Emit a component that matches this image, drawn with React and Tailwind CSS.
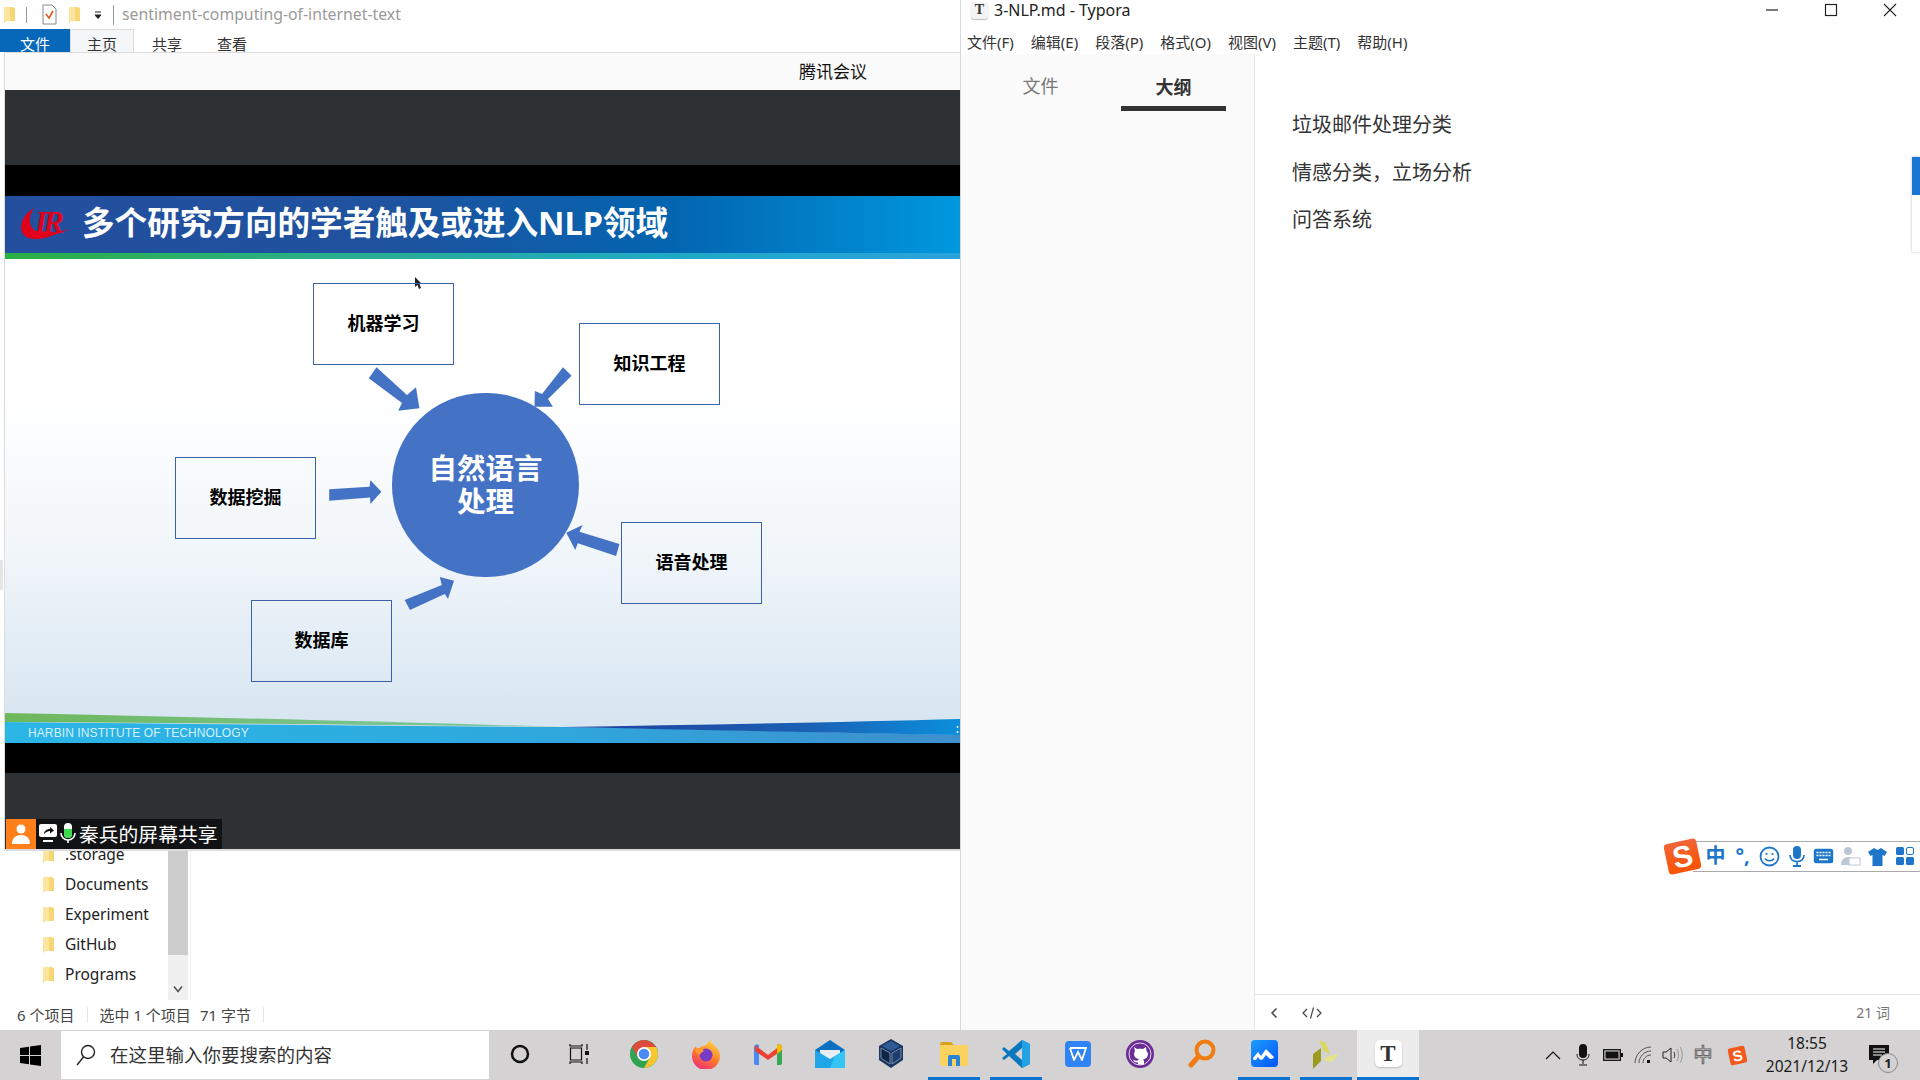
import React from 'react';

const cjk = "font-['Noto_Sans','Noto_Sans_CJK_SC',sans-serif]";

const Folder = ({ className = '' }) => (
  <svg className={className} width="14" height="18" viewBox="0 0 14 18">
    <path d="M1 1h8l3 1v13H3l-2 2z" fill="#f9d675" />
    <path d="M1 1h6v14H1z" fill="#fce59f" />
  </svg>
);

const nodes = [
  { text: '机器学习', pos: 'left-[308px] top-[24px]' },
  { text: '知识工程', pos: 'left-[574px] top-[64px]' },
  { text: '数据挖掘', pos: 'left-[170px] top-[198px]' },
  { text: '语音处理', pos: 'left-[616px] top-[263px]' },
  { text: '数据库', pos: 'left-[246px] top-[341px]' },
];

const arrows = [
  '376.5,367.3 407,395 416,387.3 419.4,408.3 398.2,410.7 402,403 368.8,378.3',
  '563,367.3 542,394 534.9,391 534.5,406.7 552.9,406.7 548,399 571.6,375.7',
  '329.2,489.3 369.5,486.7 370.4,480.3 381.4,491.7 370.4,504 370,497.5 329.2,500.7',
  '619.4,544 579.4,531.7 582.7,525 566.3,532.7 575.3,550 577.8,543.3 616.1,556',
  '404.7,600 441.8,585 439.8,577 454,580.7 448,598.7 444.7,594 410,610',
];

const Slide = () => (
  <div className="flex h-[547px] flex-col">
    {/* Slide header */}
    <div className="flex h-[57px] items-center bg-[linear-gradient(90deg,#234f9e_0%,#1f529f_40%,#0365b0_70%,#0098de_100%)] pb-[2px] pl-[15px]">
      <svg width="52" height="36" viewBox="0 0 52 36">
        <path d="M14 2C4 8-1 18 2 26c2 7 14 9 26 5 8-3 16-5 22-8-12 3-26 6-34 2C8 21 8 10 14 2z" fill="#e1001a" />
        <text x="15" y="27" fill="#e1001a" fontFamily="Liberation Serif" fontStyle="italic" fontWeight="700" fontSize="31" textLength="29">IR</text>
      </svg>
      <h1 className="ml-[10px] text-[32.6px] leading-none font-bold text-white">多个研究方向的学者触及或进入NLP领域</h1>
    </div>
    <div className="h-[6px] bg-[linear-gradient(90deg,#2bb042_0%,#29ae8e_35%,#1fa9c6_70%,#2aa3dc_100%)]" />

    {/* Diagram */}
    <div className="relative flex-1 overflow-hidden bg-[linear-gradient(180deg,#ffffff_0%,#ffffff_28%,#f1f6fa_60%,#d8e6f1_95%)]">
      <svg className="absolute inset-0" width="955" height="484" viewBox="5 259 955 484">
        {arrows.map((pts) => (
          <polygon key={pts} points={pts} fill="#4472c4" />
        ))}
        <polygon points="415,277 415,287 417.5,285 419,289 421,288 419.5,284 422,284" fill="#222" />
      </svg>
      {nodes.map((n) => (
        <div key={n.text} className={`absolute flex h-[82px] w-[141px] items-center justify-center border border-[#3a62a9] pb-[2px] text-[18px] font-bold text-black ${n.pos}`}>
          {n.text}
        </div>
      ))}
      <div className="absolute top-[134px] left-[387px] flex h-[184px] w-[187px] items-center justify-center rounded-full bg-[#4472c4] text-center text-[28.5px] leading-[33px] font-bold text-white">
        自然语言<br />处理
      </div>

      {/* Footer wave */}
      <svg className="absolute bottom-0 left-0" width="955" height="31" viewBox="5 712 955 31">
        <defs>
          <linearGradient id="band" x1="0" x2="1" y1="0" y2="0">
            <stop offset="0" stopColor="#2bb6e6" />
            <stop offset="0.55" stopColor="#2ea8de" />
            <stop offset="1" stopColor="#3e8fcd" />
          </linearGradient>
          <linearGradient id="wave" x1="0" x2="1" y1="0" y2="0">
            <stop offset="0" stopColor="#1d3f9c" />
            <stop offset="0.6" stopColor="#1b5fb3" />
            <stop offset="1" stopColor="#0b8fdc" />
          </linearGradient>
          <linearGradient id="grass" x1="0" x2="1" y1="0" y2="0">
            <stop offset="0" stopColor="#6db85a" />
            <stop offset="1" stopColor="#7fc8a8" />
          </linearGradient>
        </defs>
        <path d="M5 722C200 724 400 726 563 727C700 729 850 733 960 735V743H5Z" fill="url(#band)" />
        <path d="M5 713C200 717 400 722 563 727C400 725 200 723 5 722Z" fill="url(#grass)" />
        <path d="M563 727C700 725 850 722 960 719V735C850 733 700 730 563 727Z" fill="url(#wave)" />
        <circle cx="957.5" cy="727" r="1" fill="#fff" />
        <circle cx="957.5" cy="732" r="1" fill="#fff" />
      </svg>
      <span className="absolute bottom-[4px] left-[23px] font-['Liberation_Sans',sans-serif] text-[12px] leading-none tracking-[0.1px] text-[#d5f0fa]">HARBIN INSTITUTE OF TECHNOLOGY</span>
    </div>
  </div>
);

const ExplorerPane = () => (
  <div className="flex h-[149px] overflow-hidden">
    <ul className="-mt-[11px] w-[168px] text-[15.5px] text-[#222]">
      {['.storage', 'Documents', 'Experiment', 'GitHub', 'Programs'].map((name) => (
        <li key={name} className="flex h-[30px] items-center pl-[42px]">
          <Folder />
          <span className="ml-[9px]">{name}</span>
        </li>
      ))}
    </ul>
    <div className="flex w-[20px] flex-col bg-[#f0f0f0]">
      <div className="h-[104px] bg-[#cdcdcd]" />
      <div className="mt-auto flex h-[22px] items-center justify-center">
        <svg width="10" height="8" viewBox="0 0 10 8"><path d="M1 1.5l4 5 4-5" fill="none" stroke="#555" strokeWidth="1.6" /></svg>
      </div>
    </div>
    <div className="w-[3px] border-r border-[#f0f0f0]" />
  </div>
);

const LeftColumn = () => (
  <div className="flex w-[960px] flex-col bg-white">
    {/* Explorer title */}
    <div className="flex h-[29px] items-center">
      <Folder className="ml-[3px]" />
      <div className="ml-[9px] h-[16px] w-px bg-[#999]" />
      <svg className="ml-[15px]" width="15" height="21" viewBox="0 0 15 21">
        <path d="M1 1h9l4 4v15H1z" fill="#fff" stroke="#888" />
        <path d="M4 10l3 4 4-7" fill="none" stroke="#e2571e" strokeWidth="1.6" />
      </svg>
      <Folder className="ml-[11px]" />
      <svg className="ml-[12px]" width="8" height="8" viewBox="0 0 8 8"><path d="M1 1h6M1 4h6L4 7.5z" stroke="#222" fill="#222" /></svg>
      <div className="ml-[11px] h-[20px] w-px bg-[#999]" />
      <span className="ml-[8px] text-[15.8px] text-[#9a9a9a]">sentiment-computing-of-internet-text</span>
    </div>
    {/* Ribbon tabs */}
    <div className="flex h-[23px] overflow-hidden text-[15px] leading-[20px] text-[#333]">
      <div className="w-[70px] bg-[#0767b8] pt-[5px] text-center text-white">文件</div>
      <div className="w-[64px] border-x border-t border-[#dadbdc] bg-[#f5f6f7] pt-[4px] text-center">主页</div>
      <div className="ml-[18px] w-[30px] pt-[5px]">共享</div>
      <div className="ml-[35px] w-[30px] pt-[5px]">查看</div>
    </div>
    {/* Tencent Meeting window */}
    <div className="ml-[4px] flex h-[799px] flex-col border-t border-b-2 border-l border-[#dcdcdc]">
      <div className="flex h-[37px] items-center justify-end bg-[#fafafa] pr-[93px] text-[17px] text-[#111]">腾讯会议</div>
      <div className="h-[75px] bg-[#2e3134]" />
      <div className="h-[31px] bg-black" />
      <Slide />
      <div className="h-[30px] bg-black" />
      <div className="relative flex-1 bg-[#2e3134]">
        <div className="absolute bottom-0 left-[1px] flex h-[30px] w-[216px] items-center bg-[#111214] text-[19.8px] leading-none text-white">
          <div className="flex h-[30px] w-[30px] items-center justify-center bg-[#ff7f1a]">
            <svg width="22" height="24" viewBox="0 0 22 24"><circle cx="11" cy="7" r="4.5" fill="#fff" /><path d="M2 22c0-6 4-9 9-9s9 3 9 9z" fill="#fff" /></svg>
          </div>
          <svg className="ml-[2px]" width="20" height="24" viewBox="0 0 20 24">
            <rect x="1" y="2" width="18" height="13" rx="2" fill="#fff" />
            <path d="M6 12c0-3 3-5 6-5V5l4 3.5-4 3V9c-2 0-4 1-6 3z" fill="#111" />
            <rect x="5" y="18" width="10" height="2" fill="#fff" />
          </svg>
          <svg width="20" height="24" viewBox="0 0 20 24">
            <rect x="6" y="1" width="8" height="15" rx="4" fill="#fff" />
            <path d="M6 7h8v5a4 4 0 0 1-8 0z" fill="#3ddc4e" />
            <path d="M3 11c0 4 3 7 7 7s7-3 7-7" fill="none" stroke="#fff" strokeWidth="1.6" />
            <path d="M10 18v3" stroke="#fff" strokeWidth="1.6" />
          </svg>
          <span className="ml-[1px] pt-[2px]">秦兵的屏幕共享</span>
        </div>
      </div>
    </div>
    <ExplorerPane />
    {/* Status bar */}
    <div className="flex h-[30px] items-center pl-[17px] text-[15px] text-[#444]">
      <span>6 个项目</span>
      <div className="ml-[13px] h-[16px] w-px bg-[#e4e4e4]" />
      <span className="ml-[11px]">选中 1 个项目</span>
      <span className="ml-[9px]">71 字节</span>
      <div className="ml-[12px] h-[16px] w-px bg-[#e4e4e4]" />
    </div>
  </div>
);

const menus = ['文件(F)', '编辑(E)', '段落(P)', '格式(O)', '视图(V)', '主题(T)', '帮助(H)'];

const TyporaMark = () => (
  <div className="flex h-[17px] w-[17px] items-center justify-center rounded-[3px] bg-[#f4f4f4] font-['Liberation_Serif',serif] text-[14px] leading-none font-bold text-[#333] shadow-[0_1px_1px_#bbb]">T</div>
);

const RightColumn = () => (
  <div className="flex w-[960px] flex-col border-l border-[#d9d9d9] bg-white">
    <div className="flex h-[22px] items-center pb-[2px]">
      <div className="ml-[10px]"><TyporaMark /></div>
      <span className="ml-[6px] text-[16px] text-[#222]">3-NLP.md - Typora</span>
      <div className="ml-auto flex pr-px">
        <div className="flex w-[59px] justify-center">
          <svg width="14" height="14" viewBox="0 0 14 14"><path d="M1 7h12" stroke="#222" strokeWidth="1.2" /></svg>
        </div>
        <div className="flex w-[59px] justify-center">
          <svg width="14" height="14" viewBox="0 0 14 14"><rect x="1.5" y="1.5" width="11" height="11" fill="none" stroke="#222" strokeWidth="1.2" /></svg>
        </div>
        <div className="flex w-[59px] justify-center">
          <svg width="14" height="14" viewBox="0 0 14 14"><path d="M1 1l12 12M13 1L1 13" stroke="#222" strokeWidth="1.1" /></svg>
        </div>
      </div>
    </div>
    <div className="flex h-[32px] items-center gap-[17px] pt-[8px] pl-[6px] text-[15px] text-[#333]">
      {menus.map((m) => <span key={m}>{m}</span>)}
    </div>

    <div className="flex flex-1">
      {/* Sidebar */}
      <aside className="w-[294px] border-r border-[#e8e8e8] bg-[#fafafa]">
        <div className="flex gap-[28px] pl-[27px] text-[18px]">
          <div className="h-[57px] w-[105px] pt-[3px] text-center leading-[58px] text-[#777]">文件</div>
          <div className="h-[57px] w-[105px] border-b-[5px] border-[#333] pt-[4px] text-center leading-[58px] font-bold text-[#333]">大纲</div>
        </div>
      </aside>
      {/* Editor */}
      <main className="flex flex-1 flex-col">
        <div className="flex-1 pt-[47px] pl-[37px] text-[20px] leading-[47.7px] text-[#333]">
          <p>垃圾邮件处理分类</p>
          <p>情感分类，立场分析</p>
          <p>问答系统</p>
        </div>
        <footer className="flex h-[36px] items-center border-t border-[#e4e4e4] pr-[30px] pl-[13px] text-[#666]">
          <svg width="12" height="14" viewBox="0 0 12 14"><path d="M8.5 2.5L4 7l4.5 4.5" fill="none" stroke="#444" strokeWidth="1.5" /></svg>
          <svg className="ml-[21px]" width="22" height="14" viewBox="0 0 22 14"><path d="M6 3L2 7l4 4M16 3l4 4-4 4M12.500 1.500L9.500 12.500" fill="none" stroke="#444" strokeWidth="1.2" /></svg>
          <span className="ml-auto text-[14px] text-[#777]">21 词</span>
        </footer>
      </main>
    </div>
  </div>
);

const Cell = ({ on, light, children, width = 'w-[62px]' }) => (
  <div className={`flex h-full flex-col ${width} ${light ? 'bg-[#ececec]' : ''}`}>
    <div className="flex flex-1 items-center justify-center">{children}</div>
    {on ? <div className={`h-[3px] bg-[#0c74d0] ${light ? '' : 'mx-[5px]'}`} /> : <div className="h-[3px]" />}
  </div>
);

const Chrome = () => (
  <svg width="28" height="28" viewBox="0 0 28 28">
    <circle cx="14" cy="14" r="14" fill="#2fa351" />
    <path d="M26.1 7A14 14 0 0 1 14 28L20 17.5L14 7Z" fill="#fbc62f" />
    <path d="M1.9 7A14 14 0 0 1 26.1 7H14L8 17.5Z" fill="#dd4b3e" />
    <circle cx="14" cy="14" r="7" fill="#fff" />
    <circle cx="14" cy="14" r="5.3" fill="#4a8af4" />
  </svg>
);

const Firefox = () => (
  <svg width="30" height="30" viewBox="0 0 30 30">
    <defs>
      <linearGradient id="ff" x1="0.7" x2="0.2" y1="0" y2="1">
        <stop offset="0" stopColor="#ffd53d" />
        <stop offset="0.5" stopColor="#ff7a2b" />
        <stop offset="1" stopColor="#f0267e" />
      </linearGradient>
    </defs>
    <path d="M19 1c1 3 3 4 5 6 3 3 5 6 5 10a14 14 0 0 1-28 0c0-4 1-7 4-10 0 2 1 3 2 4 2-4 7-4 9-6 1-1 2-3 3-4z" fill="url(#ff)" />
    <circle cx="15" cy="16" r="6.5" fill="#7a3bc4" />
    <path d="M4 10c3-2 7-1 9 2-2 1-4 2-4 4-3-1-5-3-5-6z" fill="#ff9a2b" />
  </svg>
);

const Gmail = () => (
  <svg width="28" height="22" viewBox="0 0 28 22">
    <path d="M0 4a3 3 0 0 1 5-2v20H2a2 2 0 0 1-2-2z" fill="#4a8af4" />
    <path d="M28 4a3 3 0 0 0-5-2v20h3a2 2 0 0 0 2-2z" fill="#34a853" />
    <path d="M1 2l13 10L27 2v6L14 17 1 8z" fill="#ea4335" />
    <path d="M23 2a3 3 0 0 1 5 2v3l-5 4z" fill="#fbbc04" />
  </svg>
);

const Mail = () => (
  <svg width="30" height="28" viewBox="0 0 30 28">
    <path d="M0 10L15 0l15 10v18H0z" fill="#0c6fc0" />
    <path d="M5 10h20v6l-10 6-10-6z" fill="#e8eef4" />
    <path d="M0 10l15 9 15-9v18H0z" fill="#1fa5e8" />
    <path d="M30 10v18H15l5-12z" fill="#35c5f5" />
  </svg>
);

const VirtualBox = () => (
  <svg className="mr-[2px]" width="26" height="29" viewBox="0 0 26 29">
    <path d="M13 0l12 7v14l-12 8-12-8V7z" fill="#1a3560" />
    <path d="M13 2l9 5-9 5-9-5z" fill="#2f5c96" />
    <path d="M3 9l9 5v11l-9-6z" fill="#0f2547" stroke="#9ab0c8" strokeWidth="0.7" />
    <path d="M23 9l-9 5v11l9-6z" fill="#1f3d6c" stroke="#9ab0c8" strokeWidth="0.7" />
  </svg>
);

const ExplorerIcon = () => (
  <svg width="28" height="24" viewBox="0 0 28 24">
    <path d="M0 2a2 2 0 0 1 2-2h9l3 3H0z" fill="#d9a21e" />
    <path d="M0 3h28v19a2 2 0 0 1-2 2H2a2 2 0 0 1-2-2z" fill="#fbd25e" />
    <path d="M8 24v-9a2 2 0 0 1 2-2h8a2 2 0 0 1 2 2v9h-4v-7h-4v7z" fill="#2a84d6" />
  </svg>
);

const VSCode = () => (
  <svg width="30" height="30" viewBox="0 0 30 30">
    <path d="M21 1l8 4v20l-8 4-13-12 -5 4-2-2 5-4-5-5 2-2 5 4z" fill="#0a78c0" />
    <path d="M21 1l8 4v20l-8 4z" fill="#21a3e6" />
    <path d="M21 9l-7 6 7 6z" fill="#d4d2d2" />
  </svg>
);

const Wps = () => (
  <div className="flex h-[26px] w-[26px] items-center justify-center rounded-[4px] bg-[#2f83f2]">
    <svg width="18" height="14" viewBox="0 0 18 14"><path d="M1 1h16l-4 12-4-8-4 8-4-12" fill="none" stroke="#fff" strokeWidth="1.8" /></svg>
  </div>
);

const GithubIcon = () => (
  <svg width="28" height="28" viewBox="0 0 28 28">
    <circle cx="14" cy="14" r="14" fill="#6c2c96" />
    <circle cx="14" cy="14" r="11" fill="none" stroke="#e6d8ee" strokeWidth="1" />
    <path d="M8 7l3 2c2-.5 4-.5 6 0l3-2 .5 4c1 1 1.500 2 1.500 3 0 3-2 5-5 5.500.5.5 1 1 1 2v3h-6v-2c-3 .5-4-1-5-3 1 .5 2 1.500 5 1 0-.5.500-1 1-1.500-3-.5-5-2-5-5 0-1 .5-2 1-3z" fill="#fff" />
  </svg>
);

const Zoomer = () => (
  <svg width="28" height="30" viewBox="0 0 28 30">
    <circle cx="17" cy="11" r="8.500" fill="none" stroke="#f07c12" strokeWidth="4" />
    <path d="M10 18L3 26" stroke="#f07c12" strokeWidth="5" strokeLinecap="round" />
  </svg>
);

const Meeting = () => (
  <div className="flex h-[27px] w-[27px] items-center justify-center rounded-[4px] bg-[linear-gradient(135deg,#1b9cfa,#0556ff)]">
    <svg width="22" height="12" viewBox="0 0 22 12"><path d="M0 10l5-6 3 4 5-7 8 8c-1 2-4 3-5 1l-3-3-3 4c-2 2-4 0-5-2l-2 3c-1 1-3 0-3-2z" fill="#fff" /></svg>
  </div>
);

const Pieces = () => (
  <svg width="28" height="30" viewBox="0 0 28 30">
    <path d="M7 1l7 3 4 11-6-3z" fill="#d9d75c" />
    <path d="M17 17l10-2-7 8-10-2z" fill="#e4e48a" />
    <path d="M1 15l8-6v13l-8 8z" fill="#9b9b1f" />
  </svg>
);

const TrayCell = ({ children }) => <div className="flex w-[30px] items-center justify-center">{children}</div>;

const Taskbar = () => (
  <div className="flex h-[50px] bg-[#d4d2d2] text-black">
    <div className="flex w-[61px] items-center justify-center">
      <svg width="21" height="21" viewBox="0 0 21 21"><path d="M0 3l9-1.300V10H0zM10 1.500L21 0v10H10zM0 11h9v8.300L0 18zM10 11h11v10l-11-1.500z" fill="#000" /></svg>
    </div>
    <div className="my-px flex w-[428px] items-center bg-white pl-[14px] text-[18.500px] text-[#333]">
      <svg width="22" height="24" viewBox="0 0 22 24"><circle cx="13" cy="9" r="6.500" fill="none" stroke="#222" strokeWidth="1.400" /><path d="M8.500 14L2 22" stroke="#222" strokeWidth="1.400" /></svg>
      <span className="ml-[13px]">在这里输入你要搜索的内容</span>
    </div>
    <Cell width="w-[62px]">
      <svg className="mr-[1px]" width="22" height="22" viewBox="0 0 22 22"><circle cx="11" cy="11" r="8" fill="none" stroke="#111" strokeWidth="2.500" /></svg>
    </Cell>
    <Cell>
      <svg className="mr-[4px]" width="22" height="22" viewBox="0 0 22 22"><path d="M1 1v2h12V1M1 21v-2h12v2M1.500 5h11v12h-11zM18 1v6M18 15v6" fill="none" stroke="#111" strokeWidth="1.200" /><rect x="16" y="8" width="4" height="4" fill="#111" /></svg>
    </Cell>
    <Cell><Chrome /></Cell>
    <Cell><Firefox /></Cell>
    <Cell><Gmail /></Cell>
    <Cell><Mail /></Cell>
    <Cell><VirtualBox /></Cell>
    <Cell on><ExplorerIcon /></Cell>
    <Cell on><VSCode /></Cell>
    <Cell><Wps /></Cell>
    <Cell><GithubIcon /></Cell>
    <Cell><Zoomer /></Cell>
    <Cell on><Meeting /></Cell>
    <Cell on><Pieces /></Cell>
    <Cell on light>
      <div className="flex h-[27px] w-[27px] items-center justify-center rounded-[5px] bg-white font-['Liberation_Serif',serif] text-[23px] leading-none font-bold text-[#333] shadow-[0_1px_2px_#bbb]">T</div>
    </Cell>

    {/* Tray */}
    <div className="ml-auto flex pr-[2px]">
      <TrayCell><svg width="16" height="10" viewBox="0 0 16 10"><path d="M1 9l7-7 7 7" fill="none" stroke="#111" strokeWidth="1.200" /></svg></TrayCell>
      <TrayCell>
        <svg width="14" height="22" viewBox="0 0 14 22"><rect x="3" y="0" width="8" height="14" rx="4" fill="#111" /><path d="M1 10c0 4 2.500 6 6 6s6-2 6-6M7 16v4M3 21h8" fill="none" stroke="#111" strokeWidth="1" /></svg>
      </TrayCell>
      <TrayCell>
        <svg width="20" height="12" viewBox="0 0 20 12"><rect x="0.700" y="0.700" width="16.600" height="10.600" fill="none" stroke="#111" strokeWidth="1.300" /><rect x="2.500" y="2.500" width="13" height="7" fill="#111" /><rect x="18" y="4" width="2" height="4" fill="#111" /></svg>
      </TrayCell>
      <TrayCell>
        <svg width="18" height="18" viewBox="0 0 18 18"><path d="M1 17C1 9 8 1 17 1M5 17c0-6 5-12 12-12M9 17c0-4 3-8 8-8" fill="none" stroke="#555" strokeWidth="1" /><rect x="13" y="14" width="3" height="3" fill="#111" /></svg>
      </TrayCell>
      <TrayCell>
        <svg width="22" height="18" viewBox="0 0 22 18"><path d="M1 6h3l5-4v14l-5-4H1z" fill="none" stroke="#222" strokeWidth="1" /><path d="M12 6c1 2 1 4 0 6" fill="none" stroke="#333" /><path d="M15 3c2 4 2 8 0 12M18 1c3 5 3 11 0 16" fill="none" stroke="#999" /></svg>
      </TrayCell>
      <TrayCell><span className="text-[19px] leading-none text-[#f4f4f4] [-webkit-text-stroke:1px_#666]">中</span></TrayCell>
      <div className="flex w-[34px] items-center justify-center pl-[4px]">
        <div className="flex h-[17px] w-[17px] -rotate-12 items-center justify-center rounded-[2px] bg-[#f25a1d] font-['Liberation_Sans',sans-serif] text-[15px] leading-none font-bold text-white">S</div>
      </div>
      <div className="flex w-[110px] flex-col items-center pt-[2px] text-[15.5px] leading-[23px] text-[#1a1a1a]">
        <span>18:55</span>
        <span>2021/12/13</span>
      </div>
      <div className="relative w-[56px]">
        <svg className="absolute top-[15px] left-[7px]" width="20" height="20" viewBox="0 0 20 20"><path d="M0 0h20v15H8l-4 4v-4H0z" fill="#111" /><path d="M4 4h12M4 7h12M4 10h9" stroke="#fff" /></svg>
        <div className="absolute top-[23px] left-[16px] flex h-[20px] w-[20px] items-center justify-center rounded-full border border-[#888] bg-[#d4d2d2] text-[13px] leading-none font-bold text-[#222]">1</div>
      </div>
    </div>
  </div>
);

const SogouBar = () => (
  <div className="absolute top-[838px] right-0 flex h-[36px] w-[254px] items-center">
    <div className="relative z-10 flex h-[31px] w-[33px] -rotate-12 items-center justify-center rounded-[4px] bg-[linear-gradient(180deg,#f0653a,#fb5200)] font-['Liberation_Sans',sans-serif] text-[30px] leading-none font-bold text-white">S</div>
    <div className="-ml-[6px] flex h-[31px] flex-1 items-center border-y border-[#aaa] bg-white pl-[9px] text-[#1d76c9]">
      <div className="flex w-[27px] justify-center text-[20px] leading-none font-bold">中</div>
      <div className="flex w-[27px] justify-center text-[20px] leading-none font-bold">°,</div>
      <div className="flex w-[27px] justify-center">
        <svg width="21" height="21" viewBox="0 0 21 21"><circle cx="10.500" cy="10.500" r="9" fill="none" stroke="currentColor" strokeWidth="1.800" /><circle cx="7.500" cy="8" r="1.100" fill="currentColor" /><circle cx="13.500" cy="8" r="1.100" fill="currentColor" /><path d="M6 12.500c2 3 7 3 9 0" fill="none" stroke="currentColor" strokeWidth="1.500" /></svg>
      </div>
      <div className="flex w-[27px] justify-center">
        <svg width="16" height="21" viewBox="0 0 16 21"><rect x="4" y="0" width="8" height="13" rx="4" fill="currentColor" /><path d="M1 9c0 4 3 6.500 7 6.500s7-2.500 7-6.500M8 16v3" fill="none" stroke="currentColor" strokeWidth="1.700" /><rect x="4" y="19" width="8" height="2" fill="currentColor" /></svg>
      </div>
      <div className="flex w-[27px] justify-center">
        <svg width="21" height="16" viewBox="0 0 21 16"><rect x="0.800" y="0.800" width="19.400" height="14.400" rx="2.500" fill="currentColor" /><path d="M3.500 4.500h14M3.500 7.500h14" stroke="#fff" strokeWidth="1.500" strokeDasharray="2 1" /><path d="M6 11.500h9" stroke="#fff" strokeWidth="1.500" /></svg>
      </div>
      <div className="flex w-[27px] justify-center">
        <svg width="21" height="20" viewBox="0 0 21 20"><circle cx="8" cy="5" r="4" fill="#bcc6d6" /><path d="M1 19c0-5 3-8 7-8h3v8z" fill="#bcc6d6" /><rect x="9" y="12" width="11" height="7" fill="#fff" stroke="#bcc6d6" /></svg>
      </div>
      <div className="flex w-[27px] justify-center">
        <svg width="19" height="19" viewBox="0 0 19 19"><path d="M6 1l3.500 2L13 1l6 4-2.500 4-2-1v11h-10V8l-2 1L0 5z" fill="currentColor" /></svg>
      </div>
      <div className="flex w-[27px] justify-center">
        <svg width="18" height="18" viewBox="0 0 18 18"><rect width="8" height="8" rx="1.500" fill="currentColor" /><rect x="10.500" y="0.500" width="7" height="7" rx="1.500" fill="none" stroke="currentColor" /><rect y="10" width="8" height="8" rx="1.500" fill="currentColor" /><rect x="10" y="10" width="8" height="8" rx="1.500" fill="currentColor" /></svg>
      </div>
    </div>
  </div>
);

export default function App() {
  return (
    <div className={`relative flex h-[1080px] w-[1920px] flex-col overflow-hidden bg-white ${cjk}`}>
      <div className="flex h-[1030px]">
        <LeftColumn />
        <RightColumn />
      </div>
      <Taskbar />
      <SogouBar />
      {/* Side widget on the right edge */}
      <div className="absolute top-[157px] right-0 h-[95px] w-[8px] bg-white shadow-[0_0_3px_#bbb]">
        <div className="h-[38px] bg-[#1976d2]" />
      </div>
      {/* Sliver of a window behind, at the left edge */}
      <div className="absolute top-[560px] left-0 h-[30px] w-[3px] bg-[#e5e5e5]" />
    </div>
  );
}
